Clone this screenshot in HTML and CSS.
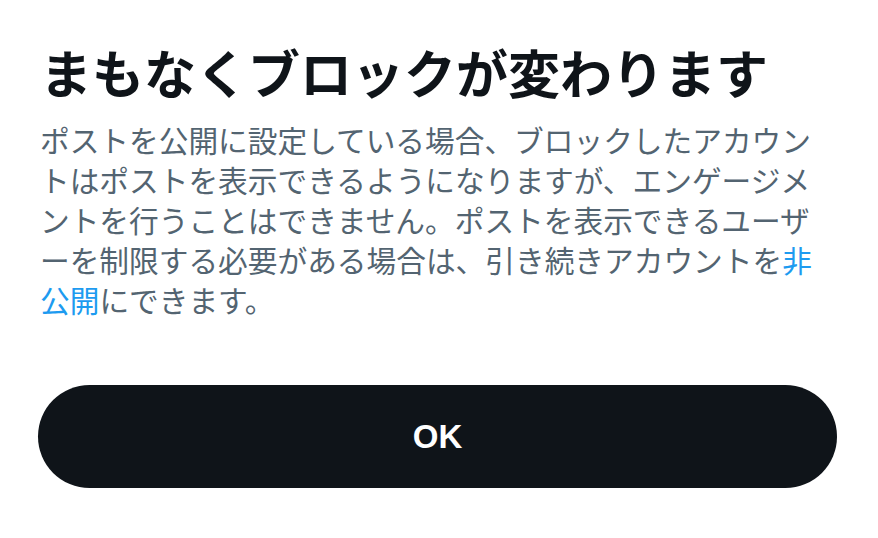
FILE: index.html
```html
<!DOCTYPE html>
<html lang="ja">
<head>
    <meta charset="UTF-8">
    <meta name="viewport" content="width=device-width, initial-scale=1.0">
    <title>ブロックの変更</title>
    <link rel="stylesheet" href="styles.css">
</head>
<body>
    <div class="sheet">
        <h1 class="sheet-title">まもなくブロックが変わります</h1>
        <p class="sheet-text">ポストを公開に設定している場合、ブロックしたアカウントはポストを表示できるようになりますが、エンゲージメントを行うことはできません。ポストを表示できるユーザーを制限する必要がある場合は、引き続きアカウントを<a href="#" class="link">非公開</a>にできます。</p>
        <button type="button" class="ok-button">OK</button>
    </div>
</body>
</html>
```

FILE: styles.css
```css
body {
    margin: 0;
    padding: 0;
    background-color: #ffffff;
    font-family: "Noto Sans CJK JP", "Noto Sans", sans-serif;
}
.sheet {
    display: flex;
    flex-direction: column;
    padding: 42px 40px 0 40px;
}
.sheet-title {
    margin: 0;
    font-size: 52px;
    line-height: 60px;
    font-weight: bold;
    color: #0f1419;
}
.sheet-text {
    margin: 18px 0 0 0;
    font-size: 29.7px;
    line-height: 40px;
    color: #536471;
}
.link {
    color: #1d9bf0;
    text-decoration: none;
}
.ok-button {
    margin: 65px 1px 0 -2px;
    height: 103px;
    border: none;
    border-radius: 52px;
    background-color: #0f1419;
    color: #ffffff;
    font-family: "Liberation Sans", Arial, sans-serif;
    font-size: 33px;
    font-weight: bold;
    cursor: pointer;
}
```
